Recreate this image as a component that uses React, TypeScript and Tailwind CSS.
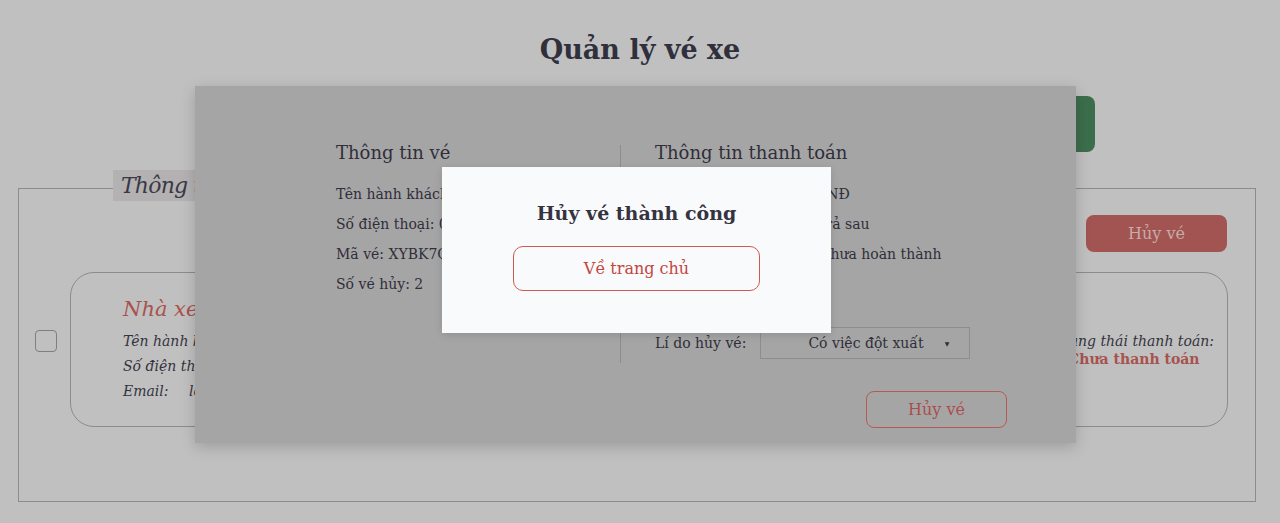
export default function App() {
  return (
    <div className="relative h-[523px] w-[1280px] overflow-hidden bg-[#c0c0c0] font-['DejaVu_Serif',serif] text-[#34333e]">
      <h1 className="pt-[30px] text-center text-[27px] font-bold leading-[40px] text-[#30303c]">Quản lý vé xe</h1>
      <div className="mt-[26px] flex justify-end pr-[185px]">
        <button className="h-[56px] w-[180px] rounded-[8px] bg-[#3c6e4c] text-[16px] text-[#c8d6cc]">Đặt vé mới</button>
      </div>
      <fieldset className="ml-[18px] mt-[18px] h-[332px] w-[1238px] border border-[#8c8c8c]">
        <legend className="ml-[94px] h-[36px]">
          <span className="block bg-[#b3b1b1] px-[8px] text-[22px] italic leading-[31px] tracking-[-0.8px] text-[#3a3945]">Thông tin vé đã đặt</span>
        </legend>
        <div className="mt-[9px] flex justify-end pr-[28px]">
          <button className="h-[37px] w-[141px] rounded-[8px] bg-[#a15451] text-[16px] text-[#c9aba7]">Hủy vé</button>
        </div>
        <div className="mt-[20px] flex items-start pl-[16px]">
          <div className="mt-[58px] h-[22px] w-[22px] rounded-[4px] border border-[#7f7f7f]" />
          <div className="ml-[13px] flex h-[155px] w-[1158px] items-center justify-between rounded-[24px] border border-[#8c8c8c]">
            <div className="self-start pl-[52px] pt-[22px] italic">
              <div className="text-[21px] leading-[28px] text-[#a8524e]">Nhà xe Phương Trang</div>
              <div className="mt-[6px] text-[14px] leading-[25px]">Tên hành khách: Nguyễn Văn An</div>
              <div className="text-[14px] leading-[25px]">Số điện thoại: 0987654321</div>
              <div className="flex text-[14px] leading-[25px]">
                <span className="w-[66px]">Email:</span>
                <span>levan@gmail.com</span>
              </div>
            </div>
            <div className="pr-[13px] text-center text-[14px] leading-[18px]">
              <div className="italic">Trạng thái thanh toán:</div>
              <div className="font-bold text-[#a8524e]">Chưa thanh toán</div>
            </div>
          </div>
        </div>
      </fieldset>

      <div className="absolute left-[195px] top-[86px] h-[357px] w-[881px] bg-[#a6a5a5] shadow-[0_4px_14px_rgba(0,0,0,0.18)]">
        <div className="flex pl-[141px] pt-[54px] text-[14px] text-[#2f2e39]">
          <div className="w-[284px]">
            <div className="text-[18px] leading-[26px]">Thông tin vé</div>
            <div className="mt-[13px] leading-[30px]">Tên hành khách: Nguyễn Văn An</div>
            <div className="leading-[30px]">Số điện thoại: 0987654321</div>
            <div className="leading-[30px]">Mã vé: XYBK7C2</div>
            <div className="leading-[30px]">Số vé hủy: 2</div>
          </div>
          <div className="mt-[5px] h-[218px] border-l border-[#8e8d8d] pl-[34px]">
            <div className="-mt-[5px] text-[18px] leading-[26px]">Thông tin thanh toán</div>
            <div className="mt-[13px] leading-[30px]">Số tiền hoàn: 240.000 VNĐ</div>
            <div className="leading-[30px]">Hình thức thanh toán: Trả sau</div>
            <div className="leading-[30px]">Trạng thái thanh toán: Chưa hoàn thành</div>
            <div className="mt-[58px] flex items-center">
              <span>Lí do hủy vé:</span>
              <div className="ml-[14px] flex h-[32px] w-[210px] items-center border border-[#8e8d8d] pl-[47px] pr-[20px]">
                <span className="flex-1">Có việc đột xuất</span>
                <span className="text-[6px]">▼</span>
              </div>
            </div>
          </div>
        </div>
        <div className="mt-[28px] flex justify-end pr-[69px]">
          <button className="h-[37px] w-[141px] rounded-[8px] border border-[#b65a55] text-[16px] text-[#a8504c]">Hủy vé</button>
        </div>
      </div>

      <div className="absolute left-[442px] top-[167px] flex h-[166px] w-[389px] flex-col items-center bg-[#f9fafc] shadow-[0_2px_8px_rgba(0,0,0,0.12)]">
        <h2 className="mt-[33px] text-[19px] font-bold leading-[26px] text-[#34333f]">Hủy vé thành công</h2>
        <button className="mt-[20px] h-[45px] w-[247px] rounded-[10px] border border-[#cf5a54] text-[16px] text-[#c4463f]">Về trang chủ</button>
      </div>
    </div>
  );
}
